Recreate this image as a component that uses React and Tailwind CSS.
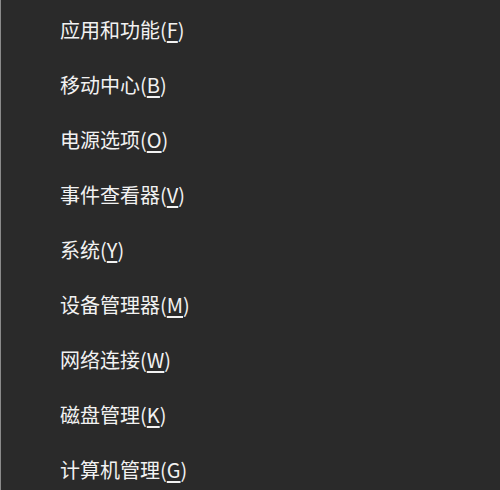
const items = [
  ["应用和功能", "F"],
  ["移动中心", "B"],
  ["电源选项", "O"],
  ["事件查看器", "V"],
  ["系统", "Y"],
  ["设备管理器", "M"],
  ["网络连接", "W"],
  ["磁盘管理", "K"],
  ["计算机管理", "G"],
]

export default function App() {
  return (
    <div
      className="h-[490px] w-[500px] overflow-hidden border-l border-[#8a8a8a] bg-[#2a2a2a] pt-[2px] text-[#f2f2f2]"
      style={{ fontFamily: '"Noto Sans CJK SC", "Noto Sans", sans-serif' }}
    >
      {items.map(([label, key]) => (
        <div key={key} className="flex h-[55px] items-center pl-[59px] text-[20px] leading-none">
          <span>
            {label}(<span className="underline underline-offset-[3px]">{key}</span>)
          </span>
        </div>
      ))}
    </div>
  )
}
